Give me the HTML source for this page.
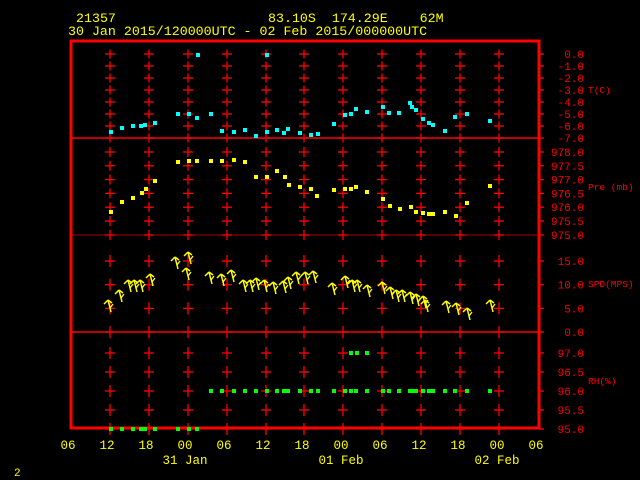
<!DOCTYPE html>
<html><head><meta charset="utf-8"><style>
html,body{margin:0;padding:0;background:#000;width:640px;height:480px;overflow:hidden}
svg{display:block}
text{font-family:"Liberation Mono",monospace;white-space:pre}
</style></head><body>
<svg id="s" width="640" height="480" xmlns="http://www.w3.org/2000/svg">
<g fill="#ffff00" font-size="13.3">
<text x="76" y="22">21357</text>
<text x="268" y="22">83.10S  174.29E    62M</text>
<text x="68" y="35">30 Jan 2015/120000UTC - 02 Feb 2015/000000UTC</text>
<g font-size="12.5" text-anchor="middle">
<text x="68" y="449">06</text><text x="107" y="449">12</text><text x="146" y="449">18</text><text x="185" y="449">00</text><text x="224" y="449">06</text><text x="263" y="449">12</text><text x="302" y="449">18</text><text x="341" y="449">00</text><text x="380" y="449">06</text><text x="419" y="449">12</text><text x="458" y="449">18</text><text x="497" y="449">00</text><text x="536" y="449">06</text>
<text x="185" y="464">31 Jan</text><text x="341" y="464">01 Feb</text><text x="497" y="464">02 Feb</text>
</g>
<text x="14" y="476" font-size="11">2</text>
</g>
<g fill="#ff0000" font-size="11" text-anchor="end" id="lab"></g>
<g fill="#ff0000" font-size="9.5">
<text x="588" y="93">T(C)</text><text x="588" y="190">Pre (mb)</text><text x="588" y="287">SPD(MPS)</text><text x="588" y="384">RH(%)</text>
</g>
<g id="g"></g>
</svg>
<script>
var s=document.getElementById('g'),L=document.getElementById('lab'),NS='http://www.w3.org/2000/svg';
function el(p,n,a){var e=document.createElementNS(NS,n);for(var k in a)e.setAttribute(k,a[k]);p.appendChild(e);return e}
function ln(x1,y1,x2,y2,c,w){el(s,'line',{x1:x1,y1:y1,x2:x2,y2:y2,stroke:c,'stroke-width':w||1})}
var xs=[];for(var i=1;i<=11;i++)xs.push(Math.round(71+38.9*i));
var ys=[],labs=[];
function addp(y0,step,n,vals,h){for(var i=0;i<n;i++){ys.push([y0+step*i,h]);labs.push([y0+step*i,vals[i]])}}
addp(54,12,8,['0.0','-1.0','-2.0','-3.0','-4.0','-5.0','-6.0','-7.0'],4.5);
addp(152,13.8,6,['978.0','977.5','977.0','976.5','976.0','975.5'],5);
labs.push([235,'975.0']);ys.push([235,5]);
addp(261,23.7,4,['15.0','10.0','5.0','0.0'],6);
addp(353,19,5,['97.0','96.5','96.0','95.5','95.0'],6);
labs.forEach(function(l){var t=el(L,'text',{x:584,y:l[0]+4});t.textContent=l[1]});
ln(71,138,539,138,'#f00',1.5);ln(71,235,539,235,'#a00',1);ln(71,332,539,332,'#f00',1.5);
ys.forEach(function(p){var y=p[0],h=p[1];xs.forEach(function(x){ln(x,y-h,x,y+h,'#f00',1.3);ln(x-5,y,x+5,y,'#f00',1.3)});ln(539,y,544,y,'#f00',1.3)});
el(s,'rect',{x:71,y:41,width:468,height:387,fill:'none',stroke:'#f00','stroke-width':3});
function sq(pts,c,w,h){pts.forEach(function(p){el(s,'rect',{x:p[0]-2,y:p[1]-2,width:w,height:h,fill:c})})}
sq([[111,132],[122,128],[133,126],[141,126],[145,125],[155,123],[178,114],[189,114],[197,118],[211,114],[198,55],[222,131],[234,132],[245,130],[256,136],[267,132],[267,55],[277,130],[284,133],[288,129],[300,133],[311,135],[318,134],[334,124],[345,115],[351,114],[356,109],[367,112],[383,107],[389,113],[399,113],[410,103],[412,107],[416,110],[423,119],[429,123],[433,125],[445,131],[455,117],[467,114],[490,121]],'#00ffff',4,4);
sq([[111,212],[122,202],[133,198],[142,193],[146,189],[155,181],[178,162],[189,161],[197,161],[211,161],[222,161],[234,160],[245,162],[256,177],[267,177],[277,171],[285,177],[289,185],[300,187],[311,189],[317,196],[334,190],[345,189],[351,189],[356,187],[367,192],[383,199],[390,206],[400,209],[411,207],[416,212],[423,213],[429,214],[433,214],[445,212],[456,216],[467,203],[490,186]],'#ffff00',4,4);
var g96=[211,222,234,245,256,267,277,284,288,300,311,318,334,345,351,356,367,383,389,399,410,412,416,423,429,433,445,455,467,490];
sq(g96.map(function(x){return[x,391]}),'#00ff00',4,4);
sq([[351,353],[357,353],[367,353]],'#00ff00',4,4);
sq([[111,429],[122,429],[133,429],[141,429],[145,429],[155,429],[178,429],[189,429],[197,429]],'#00ff00',4,4);
var w=[[108,300],[119,290],[128,280],[134,280],[140,280],[150,274],[175,257],[188,252],[186,268],[209,272],[221,274],[231,270],[243,280],[250,280],[256,278],[264,280],[273,282],[283,281],[288,277],[296,272],[305,272],[313,271],[332,283],[345,276],[352,280],[357,280],[367,285],[382,282],[390,287],[396,290],[402,290],[410,292],[416,294],[423,296],[425,300],[446,301],[456,303],[467,308],[490,300]];
w.forEach(function(p){var x=p[0],y=p[1];ln(x+3,y+12,x,y,'#ff0',1.5);ln(x,y,x-4,y+4,'#ff0',1.5);ln(x,y,x+4,y+3,'#ff0',1.5);ln(x+2,y+8,x+5,y+4,'#ff0',1.3)});
</script>
</body></html>
